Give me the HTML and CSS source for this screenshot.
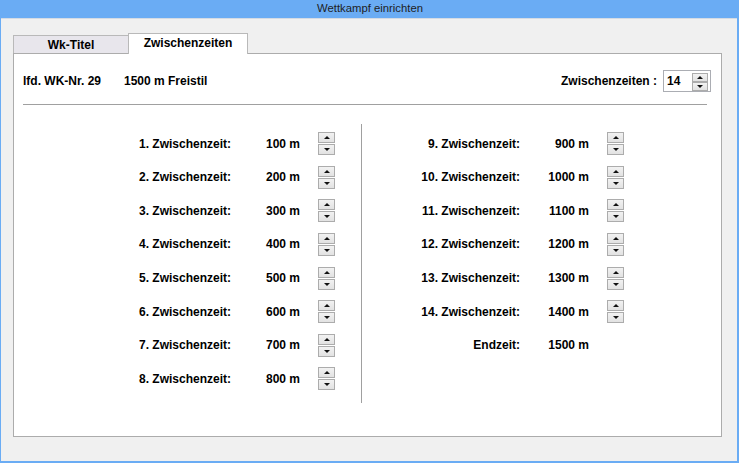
FILE: index.html
```html
<!DOCTYPE html>
<html lang="de">
<head>
<meta charset="utf-8">
<title>Wettkampf einrichten</title>
<link rel="stylesheet" href="styles.css">
</head>
<body>
<div class="window">
  <div class="titlebar">Wettkampf einrichten</div>
  <div class="client">
    <div class="tabs">
      <div class="tab">Wk-Titel</div>
      <div class="tab tab-active">Zwischenzeiten</div>
    </div>
    <div class="panel">
      <div class="header">
        <span class="wknr">lfd. WK-Nr. 29</span>
        <span class="wkname">1500 m Freistil</span>
        <span class="count-label">Zwischenzeiten :</span>
        <div class="numbox">
          <span class="numval">14</span>
          <div class="spin spin-small">
            <div class="sbtn"><span class="up"></span></div>
            <div class="sbtn"><span class="down"></span></div>
          </div>
        </div>
      </div>
      <div class="hline"></div>
      <div class="columns">
        <div class="col col-left">
          <div class="row"><span class="lbl">1. Zwischenzeit:</span><span class="val">100 m</span><div class="spin"><div class="sbtn"><span class="up"></span></div><div class="sbtn"><span class="down"></span></div></div></div>
          <div class="row"><span class="lbl">2. Zwischenzeit:</span><span class="val">200 m</span><div class="spin"><div class="sbtn"><span class="up"></span></div><div class="sbtn"><span class="down"></span></div></div></div>
          <div class="row"><span class="lbl">3. Zwischenzeit:</span><span class="val">300 m</span><div class="spin"><div class="sbtn"><span class="up"></span></div><div class="sbtn"><span class="down"></span></div></div></div>
          <div class="row"><span class="lbl">4. Zwischenzeit:</span><span class="val">400 m</span><div class="spin"><div class="sbtn"><span class="up"></span></div><div class="sbtn"><span class="down"></span></div></div></div>
          <div class="row"><span class="lbl">5. Zwischenzeit:</span><span class="val">500 m</span><div class="spin"><div class="sbtn"><span class="up"></span></div><div class="sbtn"><span class="down"></span></div></div></div>
          <div class="row"><span class="lbl">6. Zwischenzeit:</span><span class="val">600 m</span><div class="spin"><div class="sbtn"><span class="up"></span></div><div class="sbtn"><span class="down"></span></div></div></div>
          <div class="row"><span class="lbl">7. Zwischenzeit:</span><span class="val">700 m</span><div class="spin"><div class="sbtn"><span class="up"></span></div><div class="sbtn"><span class="down"></span></div></div></div>
          <div class="row"><span class="lbl">8. Zwischenzeit:</span><span class="val">800 m</span><div class="spin"><div class="sbtn"><span class="up"></span></div><div class="sbtn"><span class="down"></span></div></div></div>
        </div>
        <div class="vline"></div>
        <div class="col col-right">
          <div class="row"><span class="lbl">9. Zwischenzeit:</span><span class="val">900 m</span><div class="spin"><div class="sbtn"><span class="up"></span></div><div class="sbtn"><span class="down"></span></div></div></div>
          <div class="row"><span class="lbl">10. Zwischenzeit:</span><span class="val">1000 m</span><div class="spin"><div class="sbtn"><span class="up"></span></div><div class="sbtn"><span class="down"></span></div></div></div>
          <div class="row"><span class="lbl">11. Zwischenzeit:</span><span class="val">1100 m</span><div class="spin"><div class="sbtn"><span class="up"></span></div><div class="sbtn"><span class="down"></span></div></div></div>
          <div class="row"><span class="lbl">12. Zwischenzeit:</span><span class="val">1200 m</span><div class="spin"><div class="sbtn"><span class="up"></span></div><div class="sbtn"><span class="down"></span></div></div></div>
          <div class="row"><span class="lbl">13. Zwischenzeit:</span><span class="val">1300 m</span><div class="spin"><div class="sbtn"><span class="up"></span></div><div class="sbtn"><span class="down"></span></div></div></div>
          <div class="row"><span class="lbl">14. Zwischenzeit:</span><span class="val">1400 m</span><div class="spin"><div class="sbtn"><span class="up"></span></div><div class="sbtn"><span class="down"></span></div></div></div>
          <div class="row"><span class="lbl">Endzeit:</span><span class="val">1500 m</span></div>
        </div>
      </div>
    </div>
  </div>
</div>
</body>
</html>
```

FILE: styles.css
```css
* { box-sizing: border-box; }
html, body { margin: 0; padding: 0; }
body {
  width: 739px;
  height: 463px;
  overflow: hidden;
  font-family: "Liberation Sans", Arial, sans-serif;
  font-size: 12px;
  color: #000;
}
.window {
  width: 739px;
  height: 463px;
  background: #f0f0f0;
  border-left: 1px solid #6aacf4;
  border-right: 2px solid #6aacf4;
  border-bottom: 2px solid #6aacf4;
  display: flex;
  flex-direction: column;
}
.titlebar {
  height: 18px;
  flex: none;
  background: #6aacf4;
  text-align: center;
  font-size: 11.3px;
  line-height: 17px;
  color: #1e1e1e;
  padding-left: 2px;
}
.client {
  flex: 1;
  padding: 14px 0 0 12px;
  border-top: 1px solid #d4dbe4;
}
.tabs {
  display: flex;
  align-items: flex-end;
  height: 20px;
}
.tab {
  width: 116px;
  height: 18px;
  background: #e8e6ec;
  border: 1px solid #b9b9b9;
  border-bottom: none;
  font-weight: bold;
  text-align: center;
  line-height: 18px;
}
.tab-active {
  position: relative;
  z-index: 1;
  width: 120px;
  height: 21px;
  margin-left: -1px;
  margin-bottom: -1px;
  background: #fff;
  line-height: 19px;
}
.panel {
  width: 709px;
  height: 384px;
  background: #fff;
  border: 1px solid #acacac;
  padding: 16px 10px 0 9px;
}
.header {
  display: flex;
  align-items: center;
  height: 22px;
  font-weight: bold;
}
.wknr { width: 101px; }
.wkname { flex: 1; }
.count-label { margin-right: 6px; }
.numbox {
  width: 48px;
  height: 22px;
  border: 1px solid #abadb3;
  display: flex;
  align-items: flex-start;
  padding: 1px 2px 0 3px;
}
.numval {
  flex: 1;
  line-height: 14px;
  padding-top: 2px;
}
.hline {
  height: 1px;
  background: #a0a0a0;
  margin: 12px 4px 0 0;
}
.columns {
  display: flex;
  margin-top: 19px;
}
.col {
  padding: 3px 0 7px;
}
.col-left { width: 338px; --lw: 208px; }
.col-right { --lw: 158px; }
.vline {
  width: 1px;
  background: #a0a0a0;
}
.row {
  display: flex;
  align-items: center;
  height: 33.57px;
  font-weight: bold;
}
.lbl {
  width: var(--lw);
  text-align: right;
}
.val {
  width: 69px;
  text-align: right;
}
.spin {
  width: 17px;
  margin-left: 18px;
  display: flex;
  flex-direction: column;
  gap: 1px;
}
.sbtn {
  height: 11px;
  border: 1px solid #acacac;
  background: linear-gradient(#f2f2f2, #e2e2e2);
  display: flex;
  align-items: center;
  justify-content: center;
}
.spin-small {
  width: 16px;
  margin-left: 0;
  margin-top: 1px;
  gap: 0;
}
.spin-small .sbtn { height: 9px; }
.up, .down {
  width: 0;
  height: 0;
  border-left: 3px solid transparent;
  border-right: 3px solid transparent;
}
.up { border-bottom: 3px solid #111; }
.down { border-top: 3px solid #111; }
```
